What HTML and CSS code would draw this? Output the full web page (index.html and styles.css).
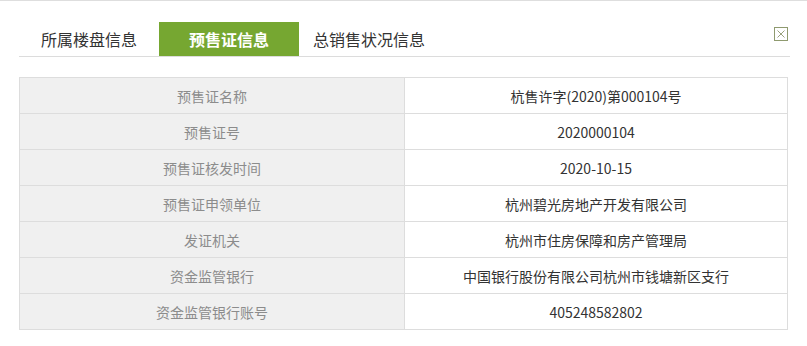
FILE: index.html
```html
<!DOCTYPE html>
<html lang="zh-CN">
<head>
<meta charset="utf-8">
<link rel="stylesheet" href="styles.css">
</head>
<body>
<div class="page">
  <div class="tabs">
    <div class="tab">所属楼盘信息</div>
    <div class="tab active">预售证信息</div>
    <div class="tab">总销售状况信息</div>
    <div class="close" title="关闭">
      <svg width="14" height="14" viewBox="0 0 14 14"><rect x="0.5" y="0.5" width="13" height="13" fill="none" stroke="#8f9a6f"/><path d="M3.5 3.5 L10.5 10.5 M10.5 3.5 L3.5 10.5" stroke="#9aa27e" stroke-width="1"/></svg>
    </div>
  </div>
  <table class="info">
    <tr><th>预售证名称</th><td>杭售许字(2020)第000104号</td></tr>
    <tr><th>预售证号</th><td>2020000104</td></tr>
    <tr><th>预售证核发时间</th><td>2020-10-15</td></tr>
    <tr><th>预售证申领单位</th><td>杭州碧光房地产开发有限公司</td></tr>
    <tr><th>发证机关</th><td>杭州市住房保障和房产管理局</td></tr>
    <tr class="no-bottom"><th>资金监管银行</th><td>中国银行股份有限公司杭州市钱塘新区支行</td></tr>
    <tr><th>资金监管银行账号</th><td>405248582802</td></tr>
  </table>
</div>
</body>
</html>
```

FILE: styles.css
```css
html, body {
  margin: 0;
  padding: 0;
  background: #fff;
}
body {
  font-family: "Noto Sans CJK SC", "Noto Sans", sans-serif;
  width: 807px;
  height: 346px;
  overflow: hidden;
}
.page {
  border-top: 1px solid #dedede;
  padding: 21px 17px 0 19px;
}
.tabs {
  display: flex;
  align-items: stretch;
  border-bottom: 1px solid #dcdcdc;
  height: 34px;
}
.tab {
  width: 140px;
  height: 34px;
  line-height: 34px;
  text-align: center;
  font-size: 16px;
  color: #333;
}
.tab.active {
  background: #76a731;
  color: #fff;
  font-weight: bold;
}
.close {
  margin-left: auto;
  margin-right: 2px;
  margin-top: 5px;
  width: 14px;
  height: 14px;
}
.close svg {
  display: block;
}
.info {
  margin-top: 20px;
  width: 769px;
  border-collapse: collapse;
  table-layout: fixed;
  font-size: 14px;
}
.info th, .info td {
  border: 1px solid #dddddd;
  height: 35px;
  padding: 0;
  text-align: center;
  vertical-align: middle;
  font-weight: normal;
}
.info th {
  width: 384px;
  background: #f0f0f0;
  color: #8c8c8c;
}
.info td {
  color: #333;
}
.info tr.no-bottom th,
.info tr.no-bottom td {
  border-bottom: none;
}
```
